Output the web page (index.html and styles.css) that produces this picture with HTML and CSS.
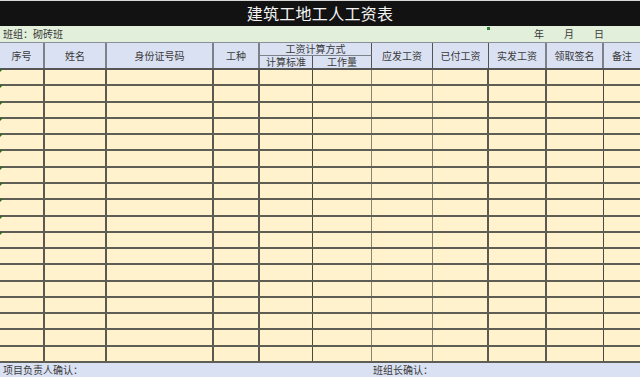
FILE: index.html
```html
<!DOCTYPE html>
<html lang="zh">
<head>
<meta charset="utf-8">
<title>建筑工地工人工资表</title>
<link rel="stylesheet" href="styles.css">
</head>
<body>
<div class="page">
  <div class="title">建筑工地工人工资表</div>
  <div class="info">
    <span class="team">班组：砌砖班</span>
    <span class="mark-top"></span>
    <span class="date"><span>年</span><span>月</span><span>日</span></span>
  </div>
  <div class="head">
    <div class="h tall">序号</div>
    <div class="h tall">姓名</div>
    <div class="h tall">身份证号码</div>
    <div class="h tall">工种</div>
    <div class="h wide">工资计算方式</div>
    <div class="h tall">应发工资</div>
    <div class="h tall">已付工资</div>
    <div class="h tall">实发工资</div>
    <div class="h tall">领取签名</div>
    <div class="h tall">备注</div>
    <div class="h sub">计算标准</div>
    <div class="h sub">工作量</div>
  </div>
  <div class="body">
    <div class="row m"><i></i><i></i><i></i><i></i><i></i><i></i><i></i><i></i><i></i><i></i><i></i></div>
    <div class="row m"><i></i><i></i><i></i><i></i><i></i><i></i><i></i><i></i><i></i><i></i><i></i></div>
    <div class="row m"><i></i><i></i><i></i><i></i><i></i><i></i><i></i><i></i><i></i><i></i><i></i></div>
    <div class="row m"><i></i><i></i><i></i><i></i><i></i><i></i><i></i><i></i><i></i><i></i><i></i></div>
    <div class="row m"><i></i><i></i><i></i><i></i><i></i><i></i><i></i><i></i><i></i><i></i><i></i></div>
    <div class="row m"><i></i><i></i><i></i><i></i><i></i><i></i><i></i><i></i><i></i><i></i><i></i></div>
    <div class="row m"><i></i><i></i><i></i><i></i><i></i><i></i><i></i><i></i><i></i><i></i><i></i></div>
    <div class="row m"><i></i><i></i><i></i><i></i><i></i><i></i><i></i><i></i><i></i><i></i><i></i></div>
    <div class="row m"><i></i><i></i><i></i><i></i><i></i><i></i><i></i><i></i><i></i><i></i><i></i></div>
    <div class="row m"><i></i><i></i><i></i><i></i><i></i><i></i><i></i><i></i><i></i><i></i><i></i></div>
    <div class="row m"><i></i><i></i><i></i><i></i><i></i><i></i><i></i><i></i><i></i><i></i><i></i></div>
    <div class="row"><i></i><i></i><i></i><i></i><i></i><i></i><i></i><i></i><i></i><i></i><i></i></div>
    <div class="row"><i></i><i></i><i></i><i></i><i></i><i></i><i></i><i></i><i></i><i></i><i></i></div>
    <div class="row"><i></i><i></i><i></i><i></i><i></i><i></i><i></i><i></i><i></i><i></i><i></i></div>
    <div class="row"><i></i><i></i><i></i><i></i><i></i><i></i><i></i><i></i><i></i><i></i><i></i></div>
    <div class="row"><i></i><i></i><i></i><i></i><i></i><i></i><i></i><i></i><i></i><i></i><i></i></div>
    <div class="row"><i></i><i></i><i></i><i></i><i></i><i></i><i></i><i></i><i></i><i></i><i></i></div>
    <div class="row"><i></i><i></i><i></i><i></i><i></i><i></i><i></i><i></i><i></i><i></i><i></i></div>
  </div>
  <div class="foot">
    <span class="f1">项目负责人确认：</span>
    <span class="f2">班组长确认：</span>
  </div>
</div>
</body>
</html>
```
FILE: styles.css
```css
* { box-sizing: border-box; margin: 0; padding: 0; }
html, body { background: #fff; }
body {
  font-family: "Noto Sans CJK SC", "DejaVu Sans", sans-serif;
  color: #3a3a3a;
  font-size: 10px;
}
.page { width: 640px; }

.title {
  height: 26px;
  background: #121212;
  color: #f4f4f4;
  font-size: 16px;
  line-height: 25px;
  text-align: center;
  letter-spacing: 0.3px;
  border-top: 1px solid #d8d8d8;
}

.info {
  position: relative;
  height: 16px;
  background: #e2efda;
  display: flex;
  align-items: center;
  justify-content: space-between;
  padding-left: 3px;
  line-height: 16px;
}
.mark-top {
  position: absolute;
  left: 487px;
  top: 1px;
  width: 3px;
  height: 3px;
  background: #2e7d32;
}
.date {
  display: flex;
  width: 106px;
}
.date span { width: 30px; }

.head {
  display: grid;
  grid-template-columns: 45px 62px 107px 46px 53px 59px 61px 56px 58px 57px 36px;
  grid-template-rows: 13px 12px;
  background: #d9e1f2;
  border-top: 1px solid #8a8f99;
  border-bottom: 2px solid #555;
}
.h {
  display: flex;
  align-items: center;
  justify-content: center;
  border-right: 2px solid #7d828a;
  line-height: 1;
  white-space: nowrap;
}
.tall { grid-row: span 2; }
.wide { grid-column: span 2; border-bottom: 1px solid #7d828a; border-right: 1px solid #555; }
.sub { border-right: 1px solid #555; }
.h:nth-child(10) { border-right: none; }
.h:nth-child(6), .h:nth-child(7) { border-right: 1px solid #555; }
.h:nth-child(11) { border-right: 1px solid #555; }

.body {
  height: 293px;
  display: grid;
  grid-template-rows: repeat(18, 1fr);
  background: #fff2cc;
}
.row {
  position: relative;
  display: grid;
  grid-template-columns: 45px 62px 107px 46px 53px 59px 61px 56px 58px 57px 36px;
  border-bottom: 2px solid #5e5e55;
}
.row i { border-right: 2px solid #5a5a52; }
.row i:nth-child(5), .row i:nth-child(6), .row i:nth-child(7), .row i:nth-child(10) { border-right: 1px solid #4a4a44; }
.row i:nth-child(6), .row i:nth-child(7) { border-right-color: #8a8570; }
.row i:nth-child(11) { border-right: none; }
.m::before {
  content: "";
  position: absolute;
  left: 0;
  top: -1px;
  width: 0;
  height: 0;
  border-top: 3px solid #2e6b1f;
  border-right: 3px solid transparent;
}

.foot {
  height: 14px;
  background: #d9e1f2;
  display: flex;
  align-items: center;
  line-height: 14px;
  padding-left: 3px;
}
.f1 { width: 370px; }
```
